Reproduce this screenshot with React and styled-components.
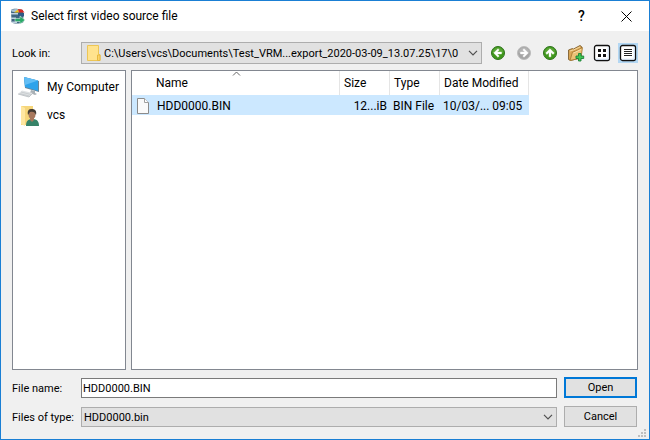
import React from "react";
import styled, { createGlobalStyle, css } from "styled-components";

const Global = createGlobalStyle`
  *, *::before, *::after { box-sizing: border-box; }
  body { margin: 0; }
  button, input, select { font: inherit; color: inherit; }
  svg { display: block; flex: none; }
`;

const Window = styled.main`
  position: relative;
  display: flex;
  flex-direction: column;
  min-height: 100vh;
  border: 1px solid #1a7fd4;
  background: #f0f0f0;
  color: #000;
  font: 12px/16px Roboto, "Noto Sans", sans-serif;
`;

const TitleBar = styled.header`
  display: flex;
  align-items: center;
  height: 30px;
  padding-left: 9px;
  background: #fff;
`;

const Title = styled.h1`
  flex: 1;
  margin: 0 0 0 5px;
  font: inherit;
`;

const CaptionButton = styled.button`
  display: grid;
  place-items: center;
  width: 45px;
  height: 30px;
  padding: 0;
  border: 0;
  background: none;
  font-size: 14px;
  font-weight: 500;
`;

const Toolbar = styled.div`
  display: flex;
  align-items: center;
  gap: 6px;
  padding: 11px 11px 6px;
`;

const Field = styled.div`
  display: flex;
  flex: 1;
  align-items: center;
  min-width: 0;
`;

const Label = styled.label`
  flex: none;
  width: 69px;
  padding-top: 2px;
  font-size: 11px;
`;

const SelectBox = styled.div`
  position: relative;
  flex: 1;
  min-width: 0;
`;

const Select = styled.select`
  display: block;
  width: 100%;
  height: ${(p) => (p.$icon ? 22 : 20)}px;
  padding: 2px 18px 0 ${(p) => (p.$icon ? 22 : 2)}px;
  border: 1px solid #adadad;
  border-radius: 0;
  background: #e1e1e1;
  font-size: 11px;
  appearance: none;
  text-overflow: ellipsis;
`;

const SelectIcon = styled.span`
  position: absolute;
  top: 3px;
  left: 6px;
  pointer-events: none;
`;

const Chevron = styled.span`
  position: absolute;
  top: 50%;
  right: 4px;
  transform: translateY(-50%);
  pointer-events: none;
`;

const TextInput = styled.input`
  flex: 1;
  min-width: 0;
  height: 20px;
  padding: 2px 1px 0;
  border: 1px solid #7a7a7a;
  border-radius: 0;
  background: #fff;
  font-size: 11px;
`;

const ToolButton = styled.button`
  display: grid;
  flex: none;
  place-items: center;
  width: 20px;
  height: 20px;
  padding: 0;
  border: 0;
  background: ${(p) => (p.$active ? "#b3d7f3" : "none")};
`;

const Panels = styled.div`
  display: flex;
  flex: 1;
  gap: 5px;
  padding: 0 11px;
`;

const panel = css`
  border: 1px solid #828790;
  background: #fff;
`;

const Sidebar = styled.nav`
  ${panel}
  flex: none;
  width: 114px;
  padding-top: 2px;
`;

const Place = styled.button`
  display: flex;
  align-items: center;
  gap: 6px;
  width: 100%;
  height: 28px;
  padding: 0 0 0 4px;
  border: 0;
  background: none;
  white-space: nowrap;
`;

const FileList = styled.section`
  ${panel}
  flex: 1;
  min-width: 0;
`;

const Table = styled.table`
  width: 397px;
  border-collapse: collapse;
  table-layout: fixed;
`;

const Column = styled.col`
  width: ${(p) => p.$width}px;
`;

const Heading = styled.th`
  position: relative;
  height: 24px;
  padding: 0 0 0 ${(p) => (p.$sorted ? 24 : 4)}px;
  box-shadow: inset -1px 0 #e5e5e5;
  font-weight: 400;
  text-align: left;
  white-space: nowrap;
`;

const SortMark = styled.span`
  position: absolute;
  top: 0;
  left: 100px;
`;

const Row = styled.tr`
  background: #cce8ff;
`;

const Cell = styled.td`
  height: 20px;
  padding: 2px 3px 0;
  text-align: ${(p) => (p.$right ? "right" : "left")};
  white-space: nowrap;
`;

const FileName = styled.span`
  display: flex;
  align-items: center;
  gap: 6px;
`;

const Footer = styled.form`
  display: grid;
  grid-template-columns: 1fr 73px;
  gap: 8px 7px;
  align-items: center;
  padding: 7px 12px 12px 11px;
`;

const Button = styled.button`
  height: 21px;
  padding: 0;
  border: ${(p) => (p.$primary ? "2px solid #0078d7" : "1px solid #adadad")};
  background: #e1e1e1;
  font-size: 11px;
  line-height: 14px;
`;

const Grip = styled.span`
  position: absolute;
  right: 3px;
  bottom: 2px;
`;

const AppIcon = () => (
  <svg width="16" height="16" viewBox="0 0 16 16">
    <path d="M1 2.500C1 1 5 .5 8 1l5 1 .500 12c-2 2-11 2-12 0z" fill="#3f6480" />
    <path d="M1 5h7v1.500H1zM1 9.500h5V11H1zM2 13.500h5V15H2z" fill="#bfd2df" />
    <ellipse cx="6" cy="2.500" rx="5" ry="1.500" fill="#a9c1d1" />
    <path d="M4 4.500l4-3 1 3z" fill="#f2c21b" />
    <path d="M8 1l4 .5 2.500 3H9z" fill="#d92a25" />
    <path d="M8 5h6v3.500H8z" fill="#2e5a86" />
    <path d="M5 10.500h5V8l5 4-5 4v-2.500H5z" fill="#29a968" stroke="#e8f5ee" strokeWidth=".5" />
  </svg>
);

const FolderIcon = () => (
  <svg width="15" height="16" viewBox="0 0 15 16">
    <path d="M.5.500h11v9h1.500v6H.500z" fill="#ffe38e" stroke="#edc655" />
    <path d="M10.500 15.500v-5.500h2.500v5.500z" fill="#fbd46a" stroke="#e6b83f" />
  </svg>
);

const ChevronIcon = () => (
  <svg width="10" height="6" viewBox="0 0 10 6">
    <path d="M1 .8l4 4 4-4" fill="none" stroke="#505050" strokeWidth="1.200" />
  </svg>
);

const arrows = {
  left: "M11.500 7H7.200l2-2L8 3.700 3.700 8 8 12.300 9.200 11l-2-2h4.300z",
  right: "M4.500 7h4.300l-2-2L8 3.700 12.300 8 8 12.300 6.800 11l2-2H4.500z",
  up: "M7 11.800V7.400l-2 2-1.300-1.300L8 3.800l4.300 4.300L11 9.400l-2-2v4.400z",
};

const ArrowIcon = ({ direction, muted }) => (
  <svg width="16" height="16" viewBox="0 0 16 16">
    <circle cx="8" cy="8" r="6.500" fill={muted ? "#a5a5a5" : "#3f971b"} stroke={muted ? "#bdbdbd" : "#2f731e"} />
    <path d="M2.500 8a5.500 5.500 0 0 1 11 0z" fill={muted ? "#b4b4b4" : "#58a634"} />
    <path d={arrows[direction]} fill="#fff" stroke="#fff" strokeWidth=".4" />
  </svg>
);

const NewFolderIcon = () => (
  <svg width="18" height="18" viewBox="0 0 18 18">
    <path d="M1.500 15.500V6l4-1.500 1 .5L13 1.500l1.500 1V5l-1 9-10 2.500z" fill="#d9a656" stroke="#80602f" strokeWidth=".9" />
    <path d="M3 7l3.500-1 6.500-3" fill="none" stroke="#f6d9a0" />
    <path d="M3 16.500L5.500 8 9 7l6.500-3.500L14 14z" fill="#ecc276" stroke="#a67831" strokeWidth=".8" />
    <path d="M6.500 9L14 5.500" stroke="#f9dfab" />
    <path d="M11.500 9.500h2.500v2.500h2.700v2.500H14V17h-2.500v-2.500H9V12h2.500z" fill="#41c653" stroke="#1c8237" strokeWidth=".9" />
  </svg>
);

const ViewIcon = ({ kind }) => (
  <svg width="18" height="18" viewBox="0 0 18 18">
    <rect x="1.500" y="1.500" width="15" height="15" rx="2" fill="#fff" stroke="#111" strokeWidth="1.300" />
    <path d="M3 15.200h12.200V3" fill="none" stroke="#cfe1f5" />
    {kind === "grid" ? (
      <path d="M5 5h3v3H5zM10 5h3v3h-3zM5 10h3v3H5zM10 10h3v3h-3z" fill="#111" />
    ) : (
      <path d="M5 5.500h8M5 7.500h8M5 9.500h8M5 11.500h8" stroke="#222" />
    )}
  </svg>
);

const ComputerIcon = () => (
  <svg width="24" height="24" viewBox="0 0 24 24">
    <path d="M7 2l15 4v11L8 13z" fill="#6d8494" />
    <path d="M7 2l14 3.500V16L8 12z" fill="#2ea3eb" />
    <path d="M7 2l14 3.500L8 10z" fill="#63bef5" />
    <path d="M14 15l4 1v2l2 1-2 1-5-2z" fill="#a9b0b5" />
    <path d="M5 15.500L16 18l-4 4-11-3z" fill="#dfe2e4" />
    <path d="M4 17l10 2.500M2.500 18.500l10 2.500" stroke="#b3b9bd" strokeWidth=".5" />
    <path d="M1 19l11 3 4-4" fill="none" stroke="#adb3b7" strokeWidth=".7" />
  </svg>
);

const UserIcon = () => (
  <svg width="24" height="24" viewBox="0 0 24 24">
    <path d="M4 3h12v19H4z" fill="#f6d67b" />
    <path d="M4 3l4 2v18l-4-2z" fill="#ffe7a0" />
    <path d="M9 23c0-5 2-7 6-7s7 1 7 7z" fill="#378369" />
    <path d="M13 14h4v3l-2 2-2-2z" fill="#a8785d" />
    <ellipse cx="15" cy="11.500" rx="3.500" ry="4.300" fill="#a8785d" />
    <path d="M11 12c-1-5 1-6 4-6s5 2 4 6c-1-3-3-4-6-3z" fill="#443c34" />
  </svg>
);

const FileIcon = () => (
  <svg width="16" height="16" viewBox="0 0 16 16">
    <path d="M2.500.500h7l4 4v11h-11z" fill="#fafafa" stroke="#8b8b8b" />
    <path d="M9.500.500v4h4" fill="#fff" stroke="#a0a0a0" />
  </svg>
);

const columns = [
  { name: "Name", width: 208, sorted: true },
  { name: "Size", width: 50 },
  { name: "Type", width: 50 },
  { name: "Date Modified", width: 89 },
];

export default function App() {
  const path = "C:\\Users\\vcs\\Documents\\Test_VRM...export_2020-03-09_13.07.25\\17\\0";
  return (
    <>
      <Global />
      <Window>
        <TitleBar>
          <AppIcon />
          <Title>Select first video source file</Title>
          <CaptionButton type="button" aria-label="Help">?</CaptionButton>
          <CaptionButton type="button" aria-label="Close">
            <svg width="11" height="11" viewBox="0 0 11 11">
              <path d="M.5.500l10 10M10.500.500l-10 10" stroke="#000" />
            </svg>
          </CaptionButton>
        </TitleBar>

        <Toolbar>
          <Field>
            <Label htmlFor="look-in">Look in:</Label>
            <SelectBox>
              <Select id="look-in" $icon>
                <option>{path}</option>
              </Select>
              <SelectIcon><FolderIcon /></SelectIcon>
              <Chevron><ChevronIcon /></Chevron>
            </SelectBox>
          </Field>
          <ToolButton type="button" aria-label="Back"><ArrowIcon direction="left" /></ToolButton>
          <ToolButton type="button" aria-label="Forward" disabled><ArrowIcon direction="right" muted /></ToolButton>
          <ToolButton type="button" aria-label="Parent directory"><ArrowIcon direction="up" /></ToolButton>
          <ToolButton type="button" aria-label="Create new folder"><NewFolderIcon /></ToolButton>
          <ToolButton type="button" aria-label="List view"><ViewIcon kind="grid" /></ToolButton>
          <ToolButton type="button" aria-label="Detail view" aria-pressed="true" $active><ViewIcon kind="list" /></ToolButton>
        </Toolbar>

        <Panels>
          <Sidebar aria-label="Places">
            <Place type="button"><ComputerIcon />My Computer</Place>
            <Place type="button"><UserIcon />vcs</Place>
          </Sidebar>
          <FileList aria-label="Files">
            <Table>
              <colgroup>
                {columns.map((c) => <Column key={c.name} $width={c.width} />)}
              </colgroup>
              <thead>
                <tr>
                  {columns.map((c) => (
                    <Heading key={c.name} $sorted={c.sorted}>
                      {c.name}
                      {c.sorted && (
                        <SortMark>
                          <svg width="9" height="5" viewBox="0 0 9 5">
                            <path d="M1 4.500l3.500-3.500L8 4.500" fill="none" stroke="#666" />
                          </svg>
                        </SortMark>
                      )}
                    </Heading>
                  ))}
                </tr>
              </thead>
              <tbody>
                <Row aria-selected="true">
                  <Cell><FileName><FileIcon />HDD0000.BIN</FileName></Cell>
                  <Cell $right>12...iB</Cell>
                  <Cell>BIN File</Cell>
                  <Cell>10/03/... 09:05</Cell>
                </Row>
              </tbody>
            </Table>
          </FileList>
        </Panels>

        <Footer onSubmit={(e) => e.preventDefault()}>
          <Field>
            <Label htmlFor="file-name">File name:</Label>
            <TextInput id="file-name" type="text" defaultValue="HDD0000.BIN" />
          </Field>
          <Button type="submit" $primary>Open</Button>
          <Field>
            <Label htmlFor="file-type">Files of type:</Label>
            <SelectBox>
              <Select id="file-type">
                <option>HDD0000.bin</option>
              </Select>
              <Chevron><ChevronIcon /></Chevron>
            </SelectBox>
          </Field>
          <Button type="button">Cancel</Button>
        </Footer>
        <Grip>
          <svg width="8" height="8" viewBox="0 0 8 8">
            <path d="M6 0h2v2H6zM6 3h2v2H6zM3 3h2v2H3zM6 6h2v2H6zM3 6h2v2H3zM0 6h2v2H0z" fill="#bfbfbf" />
          </svg>
        </Grip>
      </Window>
    </>
  );
}
